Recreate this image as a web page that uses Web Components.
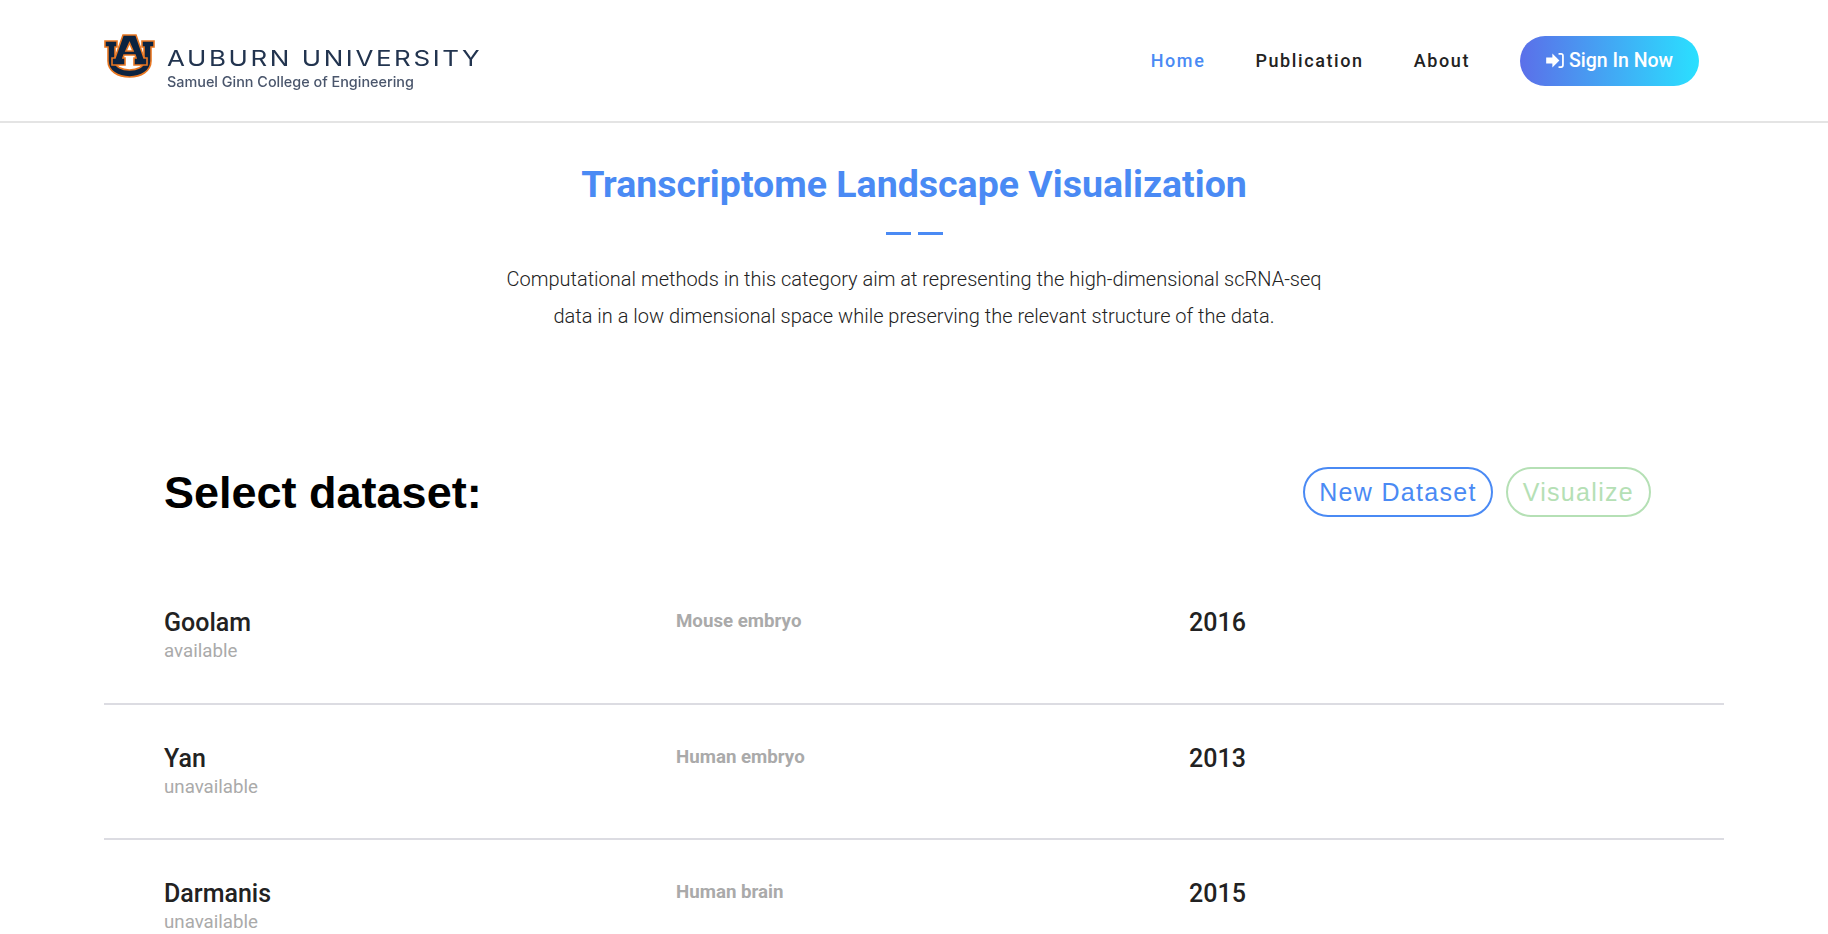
<!DOCTYPE html>
<html lang="en">
<head>
<meta charset="utf-8">
<title>Transcriptome Landscape Visualization</title>
<style>
html, body { margin: 0; background: #fff; height: 934px; overflow: hidden; }
body { font-family: Roboto, "Liberation Sans", sans-serif; color: #222; }
</style>
</head>
<body>
<site-header></site-header>
<section-title heading="Transcriptome Landscape Visualization">
  Computational methods in this category aim at representing the high-dimensional scRNA-seq<br>
  data in a low dimensional space while preserving the relevant structure of the data.
</section-title>
<dataset-list>
  <pill-button slot="actions" tone="blue">New Dataset</pill-button>
  <pill-button slot="actions" tone="green">Visualize</pill-button>
  <dataset-row name="Goolam" status="available" tissue="Mouse embryo" year="2016"></dataset-row>
  <dataset-row name="Yan" status="unavailable" tissue="Human embryo" year="2013"></dataset-row>
  <dataset-row name="Darmanis" status="unavailable" tissue="Human brain" year="2015" last></dataset-row>
</dataset-list>

<script>
const headerTemplate = document.createElement('template');
headerTemplate.innerHTML = `
<style>
:host { display: block; height: 121px; border-bottom: 2px solid #e4e4e4; box-sizing: content-box; }
* { margin: 0; box-sizing: border-box; }
.bar {
  height: 100%;
  margin: 0 104px;
  padding-right: 25px;
  display: flex;
  align-items: center;
  justify-content: space-between;
}
.logo { display: flex; align-items: flex-start; gap: 12px; filter: blur(.35px); }
.logo svg { display: block; width: 51px; height: 44px; margin-top: 3px; }
.words { color: #22344f; font-family: Inter, "Liberation Sans", sans-serif; padding-top: 14px; }
.uni { font-size: 22px; line-height: 26px; letter-spacing: 2.2px; transform: scaleX(1.18); transform-origin: left; white-space: nowrap; }
.college { font-size: 14.400px; line-height: 18px; margin-top: 2px; font-weight: 500; color: #4a566c; white-space: nowrap; }
nav { display: flex; align-items: center; }
a {
  color: #222;
  font-size: 18px;
  font-weight: 500;
  letter-spacing: 1.6px;
  text-decoration: none;
  margin-right: 50px;
}
a.active { color: #4a8af4; }
.signin {
  display: flex;
  align-items: center;
  justify-content: center;
  gap: 5px;
  width: 179px;
  height: 50px;
  border-radius: 25px;
  color: #fff;
  font-size: 19.500px;
  font-weight: 500;
  background: linear-gradient(90deg, #5b6fe9, #2ae0ff);
}
.signin svg { width: 18px; height: 15px; fill: #fff; }
</style>
<div class="bar">
  <div class="logo">
    <svg viewBox="0 0 51 44">
      <g fill="#0c2340" stroke="#e87722" stroke-width="1.6" stroke-linejoin="miter">
        <path d="M1 7H13V13H11V27C11 33 18 36 25.500 36C33 36 40 33 40 27V13H38V7H50V13H47V27C47 37 37 43 25.500 43C14 43 4 37 4 27V13H1Z"/>
        <path fill-rule="evenodd" d="M19 1H32L40 24H43V31H30V24H32L31 21H20L19 24H21V31H8V24H11ZM25.500 9L22 17H29Z"/>
      </g>
    </svg>
    <div class="words">
      <div class="uni">AUBURN UNIVERSITY</div>
      <div class="college">Samuel Ginn College of Engineering</div>
    </div>
  </div>
  <nav>
    <a class="active" href="#">Home</a>
    <a href="#">Publication</a>
    <a href="#">About</a>
    <div class="signin">
      <svg viewBox="0 0 20 17"><path d="M0 5H7V0.500L15 8.500L7 16.500V12H0ZM14 0H17C18.700 0 20 1.300 20 3V14C20 15.700 18.700 17 17 17H14V15H17C17.500 15 18 14.500 18 14V3C18 2.500 17.500 2 17 2H14Z"/></svg>
      Sign In Now
    </div>
  </nav>
</div>`;

class SiteHeader extends HTMLElement {
  constructor() {
    super();
    this.attachShadow({mode: 'open'});
    this.shadowRoot.appendChild(headerTemplate.content.cloneNode(true));
  }
}
customElements.define('site-header', SiteHeader);

const titleTemplate = document.createElement('template');
titleTemplate.innerHTML = `
<style>
:host { display: block; text-align: center; padding-top: 36px; }
h1 { margin: 0; color: #4a8af4; font-size: 37.500px; line-height: 50px; font-weight: 700; }
.dash { display: flex; justify-content: center; gap: 7px; margin-top: 23px; }
.dash i { width: 25px; height: 3px; background: #4a8af4; }
p { margin: 26px 0 0; font-size: 20px; font-weight: 300; line-height: 37px; color: #222; }
</style>
<h1></h1>
<div class="dash"><i></i><i></i></div>
<p><slot></slot></p>`;

class SectionTitle extends HTMLElement {
  constructor() {
    super();
    this.attachShadow({mode: 'open'});
    this.shadowRoot.appendChild(titleTemplate.content.cloneNode(true));
  }
  connectedCallback() {
    this.shadowRoot.querySelector('h1').textContent = this.getAttribute('heading');
  }
}
customElements.define('section-title', SectionTitle);

const pillTemplate = document.createElement('template');
pillTemplate.innerHTML = `
<style>
:host {
  display: block;
  height: 50px;
  box-sizing: border-box;
  padding: 0 15px;
  border: 2px solid var(--tone);
  border-radius: 25px;
  color: var(--tone);
  font: 25px/46px "Liberation Sans", sans-serif;
  letter-spacing: 1.3px;
}
:host([tone="blue"]) { --tone: #4a8af4; padding: 0 14px; }
:host([tone="green"]) { --tone: #b5e0b5; }
</style>
<slot></slot>`;

class PillButton extends HTMLElement {
  constructor() {
    super();
    this.attachShadow({mode: 'open'});
    this.shadowRoot.appendChild(pillTemplate.content.cloneNode(true));
  }
}
customElements.define('pill-button', PillButton);

const listTemplate = document.createElement('template');
listTemplate.innerHTML = `
<style>
:host { display: block; margin: 0 104px; padding-top: 132px; }
header {
  display: flex;
  align-items: center;
  justify-content: space-between;
  padding: 0 73px 0 60px;
  height: 50px;
}
h2 { margin: 0; color: #000; font: 700 45px/50px "Liberation Sans", sans-serif; padding-top: 2px; }
.actions { display: flex; gap: 13px; }
main { display: block; margin-top: 52px; }
</style>
<header>
  <h2>Select dataset:</h2>
  <div class="actions"><slot name="actions"></slot></div>
</header>
<main><slot></slot></main>`;

class DatasetList extends HTMLElement {
  constructor() {
    super();
    this.attachShadow({mode: 'open'});
    this.shadowRoot.appendChild(listTemplate.content.cloneNode(true));
  }
}
customElements.define('dataset-list', DatasetList);

const rowTemplate = document.createElement('template');
rowTemplate.innerHTML = `
<style>
:host {
  display: grid;
  grid-template-columns: 512px 513px 1fr;
  height: 135.500px;
  box-sizing: border-box;
  padding: 39px 0 0 60px;
  border-bottom: 2px solid #dcdce2;
}
:host([last]) { border-bottom: 0; }
.name, .year { font-size: 25px; line-height: 30px; font-weight: 500; color: #222; }
.status { font-size: 18.720px; line-height: 26px; color: #aaa; }
.tissue { font-size: 18.720px; line-height: 26px; font-weight: 700; color: #aaa; }
</style>
<div>
  <div class="name"></div>
  <div class="status"></div>
</div>
<div class="tissue"></div>
<div class="year"></div>`;

class DatasetRow extends HTMLElement {
  constructor() {
    super();
    this.attachShadow({mode: 'open'});
    this.shadowRoot.appendChild(rowTemplate.content.cloneNode(true));
  }
  connectedCallback() {
    for (const key of ['name', 'status', 'tissue', 'year']) {
      this.shadowRoot.querySelector('.' + key).textContent = this.getAttribute(key);
    }
  }
}
customElements.define('dataset-row', DatasetRow);
</script>
</body>
</html>
